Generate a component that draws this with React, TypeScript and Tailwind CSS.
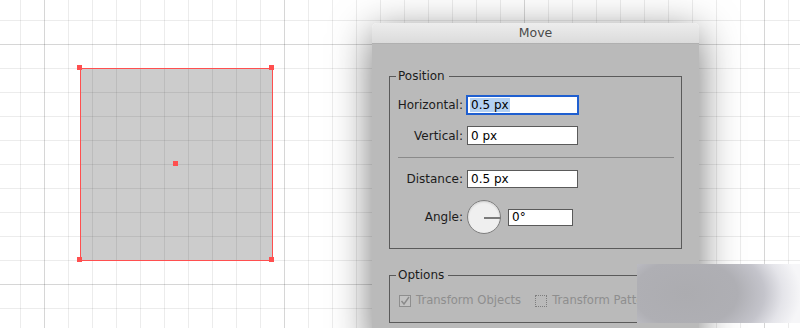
import React from "react";

const font = "font-['DejaVu_Sans',sans-serif]";

function Canvas() {
  const minor: number[] = [];
  for (let v = 20; v <= 800; v += 24) minor.push(v);
  const major = [44, 284, 524, 764];
  return (
    <svg width="800" height="328" className="absolute left-0 top-0 block">
      <rect x="0" y="0" width="800" height="328" fill="#ffffff" />
      <rect x="80" y="68" width="193" height="193" fill="#cccccc" />
      {minor.map((v) => (
        <line key={"v" + v} x1={v + 0.5} y1="0" x2={v + 0.5} y2="328" stroke="rgba(0,0,0,0.075)" strokeWidth="1" />
      ))}
      {minor.map((v) =>
        v <= 328 ? (
          <line key={"h" + v} x1="0" y1={v + 0.5} x2="800" y2={v + 0.5} stroke="rgba(0,0,0,0.075)" strokeWidth="1" />
        ) : null
      )}
      {major.map((v) => (
        <line key={"mv" + v} x1={v + 0.5} y1="0" x2={v + 0.5} y2="328" stroke="rgba(0,0,0,0.09)" strokeWidth="1" />
      ))}
      {major.slice(0, 2).map((v) => (
        <line key={"mh" + v} x1="0" y1={v + 0.5} x2="800" y2={v + 0.5} stroke="rgba(0,0,0,0.09)" strokeWidth="1" />
      ))}
      <rect x="80.5" y="68.5" width="192" height="192" fill="none" stroke="#ff4f4f" strokeWidth="1" />
      {[
        [77, 65],
        [269, 65],
        [77, 257],
        [269, 257],
        [173, 161],
      ].map(([x, y]) => (
        <rect key={x + "-" + y} x={x} y={y} width="5" height="5" fill="#ff4f4f" />
      ))}
    </svg>
  );
}

function Field({ children, w = "w-[111px]", h = "h-[18px]", focused = false }: { children: React.ReactNode; w?: string; h?: string; focused?: boolean }) {
  return (
    <div
      className={`${w} ${h} bg-white border ${
        focused ? "border-[#1f5fd0] shadow-[0_0_0_1px_#1f5fd0]" : "border-[#5a5a5a]"
      } flex items-center pl-[3px] text-[12px] leading-[14px] text-black`}
    >
      {children}
    </div>
  );
}

function Row({ label, children }: { label: string; children: React.ReactNode }) {
  return (
    <div className="flex items-center">
      <div className="w-[73px] text-right text-[12px] leading-[14px] text-[#1c1c1c]">{label}</div>
      <div className="ml-[4px] flex items-center">{children}</div>
    </div>
  );
}

function Dialog() {
  return (
    <div
      className={`absolute left-[372px] top-[23px] w-[327px] h-[320px] rounded-t-[5px] overflow-hidden shadow-[0_10px_40px_rgba(0,0,0,0.55)] ${font}`}
    >
      <div className="h-[21px] flex items-center justify-center bg-gradient-to-b from-[#ededed] to-[#dbdbdb] border-b border-[#b0b0b0] text-[12.5px] text-[#4a4a4a]">
        Move
      </div>
      <div className="bg-[#bababa] h-full px-[17px] pt-[25px]">
        <fieldset className="border border-[#5a5a5a] pt-[13px] pb-[14px]">
          <legend className="ml-[6px] pl-[2px] pr-[4px] text-[12px] leading-[14px] text-[#1c1c1c]">Position</legend>
          <div className="flex flex-col">
            <Row label="Horizontal:">
              <Field focused>
                <span className="bg-[#b3d1f3] px-[1px] -ml-[1px] leading-[14px]">0.5 px</span>
              </Field>
            </Row>
            <div className="h-[12px]" />
            <Row label="Vertical:">
              <Field h="h-[19px]">0 px</Field>
            </Row>
            <div className="mt-[12px] mb-[12px] ml-[8px] mr-[7px] h-px bg-[#8a8a8a]" />
            <Row label="Distance:">
              <Field>0.5 px</Field>
            </Row>
            <div className="h-[12px]" />
            <Row label="Angle:">
              <div className="relative w-[34px] h-[34px] rounded-full border border-[#7e7e7e] bg-[#efefef] shadow-[inset_0_1px_2px_rgba(0,0,0,0.15)]">
                <div className="absolute left-[16px] top-[16px] w-[17px] h-[2px] bg-[#7a7a7a]" />
              </div>
              <div className="ml-[7px]">
                <Field w="w-[65px]" h="h-[17px]">0°</Field>
              </div>
            </Row>
          </div>
        </fieldset>
        <fieldset className="mt-[19px] border border-[#5a5a5a] pt-[12px] pb-[14px]">
          <legend className="ml-[6px] pl-[2px] pr-[4px] text-[12px] leading-[14px] text-[#1c1c1c]">Options</legend>
          <div className="flex items-center h-[14px] pl-[9px] text-[11.6px] text-[#8e8e8e] whitespace-nowrap">
            <div className="relative w-[12px] h-[12px] border border-[#8e8e8e] bg-[#c2c2c2]">
              <svg width="10" height="10" viewBox="0 0 10 10" className="absolute left-0 top-0">
                <path d="M1.5 5 L4 8 L9 1" fill="none" stroke="#8a8a8a" strokeWidth="1.4" />
              </svg>
            </div>
            <span className="ml-[5px]">Transform Objects</span>
            <div className="ml-[14px] w-[12px] h-[12px] border border-dotted border-[#7e7e7e]" />
            <span className="ml-[5px]">Transform Patterns</span>
          </div>
        </fieldset>
      </div>
    </div>
  );
}

export default function App() {
  return (
    <div className="relative w-[800px] h-[328px] overflow-hidden bg-white">
      <Canvas />
      <Dialog />
      <div className="absolute left-[637px] top-[264px] w-[163px] h-[59px] bg-[radial-gradient(ellipse_115px_75px_at_30%_50%,#acacb0_0%,#afafb4_45%,#c4c4cb_68%,#e4e4e9_84%,#f6f6f8_100%)]" />
    </div>
  );
}
